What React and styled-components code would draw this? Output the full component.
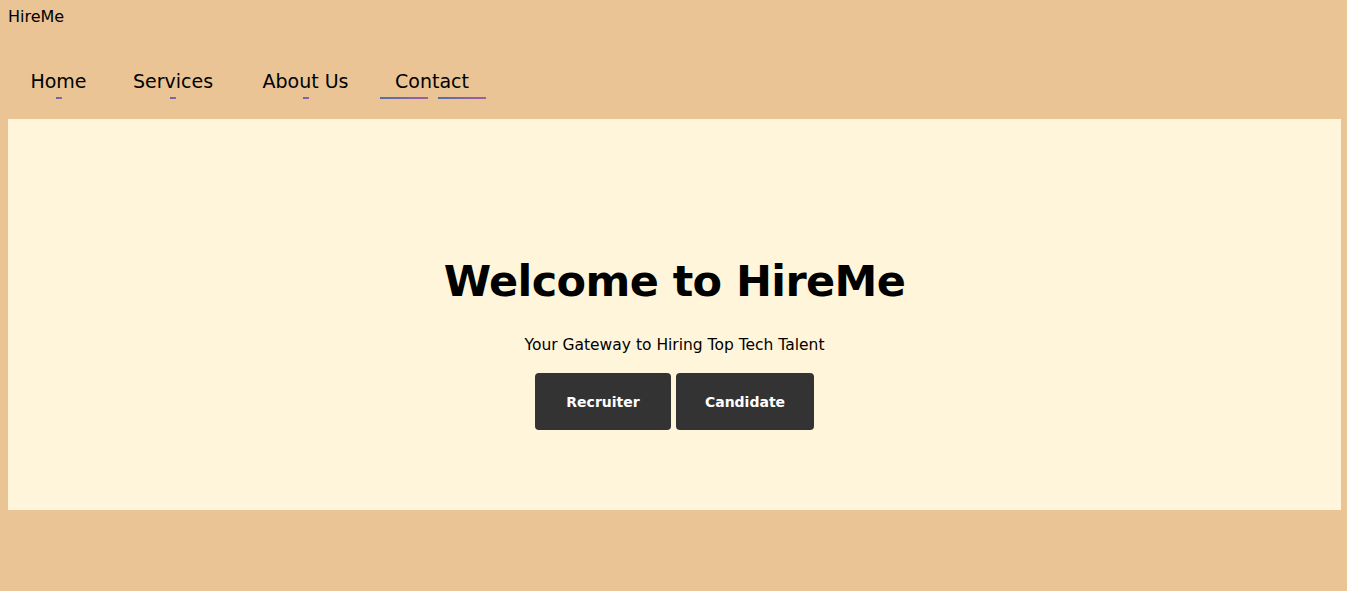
import React from "react";
import styled, { createGlobalStyle } from "styled-components";

const GlobalStyle = createGlobalStyle`
  html, body {
    margin: 0;
    padding: 0;
    background: #eac494;
  }
  body {
    font-family: "Comic Sans MS", "DejaVu Sans", sans-serif;
    color: #000;
  }
`;

const Page = styled.div`
  padding: 8px 6px 0 8px;
  min-height: 583px;
`;

const Logo = styled.div`
  font-size: 16px;
  line-height: 18px;
  height: 18px;
`;

const Nav = styled.nav`
  display: flex;
  margin-top: 43px;
  height: 50px;
`;

const NavItem = styled.a`
  position: relative;
  width: ${(p) => p.$w}px;
  display: flex;
  flex-direction: column;
  align-items: center;
  font-size: 19px;
  line-height: 24px;
  color: #000;
  text-decoration: none;
`;

const Underline = styled.div`
  display: flex;
  gap: 10px;
  margin-top: 4px;
  margin-left: ${(p) => (p.$wide ? 2 : 0)}px;
`;

const Bar = styled.span`
  display: block;
  width: ${(p) => p.$w}px;
  height: 2px;
  background: linear-gradient(to right, #4f72a8, #a35da0);
`;

const Hero = styled.section`
  background: #fff5da;
  height: 391px;
  display: flex;
  flex-direction: column;
  align-items: center;
  padding-top: 132px;
  box-sizing: border-box;
`;

const Title = styled.h1`
  margin: 0;
  font-size: 43px;
  line-height: 60px;
  font-weight: 700;
  letter-spacing: -0.6px;
`;

const Subtitle = styled.p`
  margin: 24px 0 0;
  font-size: 15.5px;
  line-height: 20px;
`;

const Buttons = styled.div`
  display: flex;
  gap: 5px;
  margin-top: 18px;
`;

const Button = styled.button`
  width: ${(p) => p.$w}px;
  height: 57px;
  border: none;
  border-radius: 4px;
  background: #333333;
  color: #fff;
  font-family: inherit;
  font-size: 14px;
  font-weight: 700;
  cursor: pointer;
`;

const links = [
  { label: "Home", w: 101 },
  { label: "Services", w: 128 },
  { label: "About Us", w: 137 },
  { label: "Contact", w: 116, active: true },
];

export default function App() {
  return (
    <>
      <GlobalStyle />
      <Page>
        <Logo>HireMe</Logo>
        <Nav>
          {links.map((l) => (
            <NavItem key={l.label} href="#" $w={l.w}>
              {l.label}
              <Underline $wide={l.active}>
                {l.active ? (
                  <>
                    <Bar $w={48} />
                    <Bar $w={48} />
                  </>
                ) : (
                  <Bar $w={6} />
                )}
              </Underline>
            </NavItem>
          ))}
        </Nav>
        <Hero>
          <Title>Welcome to HireMe</Title>
          <Subtitle>Your Gateway to Hiring Top Tech Talent</Subtitle>
          <Buttons>
            <Button $w={136}>Recruiter</Button>
            <Button $w={138}>Candidate</Button>
          </Buttons>
        </Hero>
      </Page>
    </>
  );
}
